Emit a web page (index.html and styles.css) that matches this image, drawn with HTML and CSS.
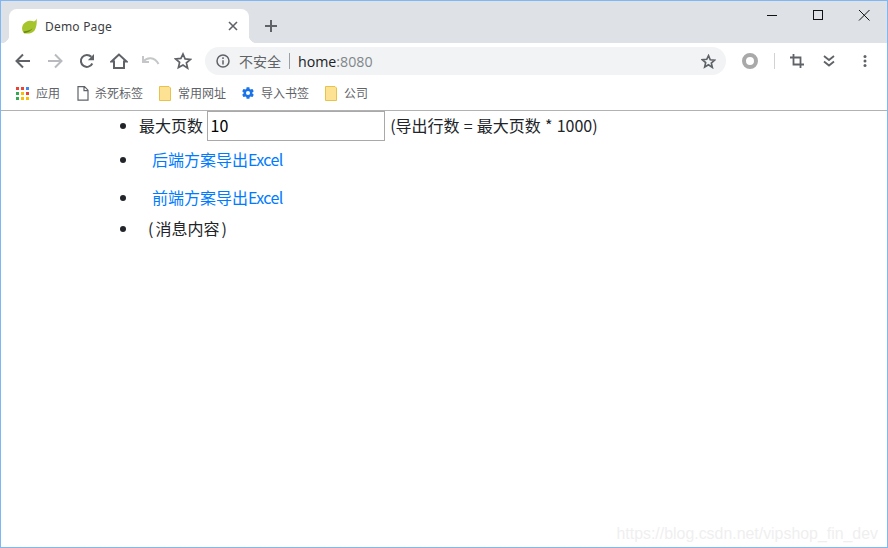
FILE: index.html
```html
<!DOCTYPE html>
<html lang="zh">
<head>
<meta charset="utf-8">
<title>Demo Page</title>
<link rel="stylesheet" href="styles.css">
</head>
<body>
<div class="window">
  <header class="titlebar">
    <div class="tab">
      <svg class="favicon" width="16" height="16" viewBox="0 0 16 16"><path d="M15.500 .5C15.300 2 14 3 13 3.500 9 1.500 3 3.500 1.500 8c-.8 2.500-.5 4.500.8 6.500l1 .8C6 15.800 11 15.800 13.600 12.500 15.500 9.500 16.200 4 15.500 .5Z" fill="#a6c52d"/><path d="M2.500 13.500C6 12.800 10 12.500 12 9.500 10.500 13 7 14.500 3.300 15.300Z" fill="#6c8a1b"/></svg>
      <span class="tab-title">Demo Page</span>
      <svg class="tab-close" width="10" height="10" viewBox="0 0 10 10"><path d="M1 1l8 8M9 1l-8 8" stroke="#5f6368" stroke-width="1.600" fill="none"/></svg>
    </div>
    <svg class="newtab" width="14" height="14" viewBox="0 0 14 14"><path d="M7 1v12M1 7h12" stroke="#5f6368" stroke-width="2" fill="none"/></svg>
    <div class="winctl">
      <svg width="46" height="11" viewBox="0 0 46 11"><path d="M18 5.500h10" stroke="#111" fill="none"/></svg>
      <svg width="46" height="11" viewBox="0 0 46 11"><rect x="18.500" y=".5" width="9" height="9" stroke="#111" fill="none"/></svg>
      <svg width="46" height="11" viewBox="0 0 46 11"><path d="M18 0l10.500 10.500M28.500 0L18 10.500" stroke="#111" fill="none"/></svg>
    </div>
  </header>

  <nav class="toolbar">
    <span class="tbtn"><svg width="16" height="16" viewBox="0 0 16 16"><path d="M15 8H2M8 1.500 1.500 8 8 14.500" stroke="#5f6368" stroke-width="2" fill="none"/></svg></span>
    <span class="tbtn"><svg width="16" height="16" viewBox="0 0 16 16"><path d="M1 8h13M8 1.500 14.500 8 8 14.500" stroke="#b8babd" stroke-width="2" fill="none"/></svg></span>
    <span class="tbtn"><svg width="16" height="16" viewBox="0 0 16 16"><path d="M13.300 10.500A6 6 0 1 1 12.300 3.800" stroke="#5f6368" stroke-width="2" fill="none"/><path d="M15 1v6.200H8.800Z" fill="#5f6368"/></svg></span>
    <span class="tbtn"><svg width="18" height="16" viewBox="0 0 18 16"><path d="M9 1.500 1.500 8.500H4v6.500h10V8.500h2.500Z" stroke="#5f6368" stroke-width="2" fill="none" stroke-linejoin="miter"/></svg></span>
    <span class="tbtn"><svg width="18" height="12" viewBox="0 0 18 12"><path d="M1 1v6h6M1.500 6.500C5 2 12.500 1.500 16.500 9" stroke="#c4c6c8" stroke-width="2" fill="none"/></svg></span>
    <span class="tbtn"><svg width="18" height="18" viewBox="0 0 18 18"><path d="M9 2l2.100 4.900 5.300.5-4 3.500 1.200 5.200L9 13l-4.600 2.600 1.200-5.200-4-3.500 5.300-.5Z" stroke="#5f6368" stroke-width="1.700" fill="none"/></svg></span>

    <div class="omnibox">
      <svg class="info" width="14" height="14" viewBox="0 0 14 14"><circle cx="7" cy="7" r="6" stroke="#5f6368" stroke-width="1.500" fill="none"/><path d="M7 6.200v4.300M7 3.300v1.600" stroke="#5f6368" stroke-width="1.500" fill="none"/></svg>
      <span class="insecure">不安全</span>
      <span class="omni-sep"></span>
      <span class="url">home<span class="url-port">:8080</span></span>
      <svg class="omni-star" width="15" height="15" viewBox="0 0 18 18"><path d="M9 2l2.100 4.900 5.300.5-4 3.500 1.200 5.200L9 13l-4.600 2.600 1.200-5.200-4-3.500 5.300-.5Z" stroke="#5f6368" stroke-width="2" fill="none"/></svg>
    </div>

    <div class="extensions">
      <svg class="ext-ring" width="16" height="16" viewBox="0 0 16 16"><circle cx="8" cy="8" r="6" stroke="#a9a9a9" stroke-width="4" fill="none"/></svg>
      <span class="ext-sep"></span>
      <svg class="ext-crop" width="14" height="14" viewBox="0 0 14 14"><path d="M3.500 0v10.500H14M0 3.500h10.500V14" stroke="#5f6368" stroke-width="1.800" fill="none"/></svg>
      <svg class="ext-chev" width="12" height="12" viewBox="0 0 12 12"><path d="M1 1l5 4 5-4M1 6.500l5 4 5-4" stroke="#5f6368" stroke-width="1.800" fill="none"/></svg>
      <svg class="ext-dots" width="4" height="12" viewBox="0 0 4 12"><circle cx="2" cy="1.500" r="1.500" fill="#5f6368"/><circle cx="2" cy="6" r="1.500" fill="#5f6368"/><circle cx="2" cy="10.500" r="1.500" fill="#5f6368"/></svg>
    </div>
  </nav>

  <div class="bookmarks">
    <span class="bm bm-apps">
      <svg width="13" height="13" viewBox="0 0 13 13">
        <rect x="0" y="0" width="3" height="3" fill="#ea4335"/><rect x="5" y="0" width="3" height="3" fill="#ea4335"/><rect x="10" y="0" width="3" height="3" fill="#4285f4"/>
        <rect x="0" y="5" width="3" height="3" fill="#34a853"/><rect x="5" y="5" width="3" height="3" fill="#fbbc05"/><rect x="10" y="5" width="3" height="3" fill="#ea4335"/>
        <rect x="0" y="10" width="3" height="3" fill="#34a853"/><rect x="5" y="10" width="3" height="3" fill="#fbbc05"/><rect x="10" y="10" width="3" height="3" fill="#fbbc05"/>
      </svg>应用</span>
    <span class="bm bm-doc">
      <svg width="12" height="15" viewBox="0 0 12 15"><path d="M1 .7h6.500L11 4.200v10H1ZM7 .7v4h4" stroke="#5f6368" stroke-width="1.200" fill="#fff"/></svg>杀死标签</span>
    <span class="bm bm-folder bm-tight">
      <svg width="12" height="15" viewBox="0 0 12 15"><path d="M.5.5h9.500l1.500 1.500v12.500H.5Z" fill="#fde293" stroke="#e9c349"/></svg>常用网址</span>
    <span class="bm bm-gear">
      <svg width="14" height="14" viewBox="0 0 24 24"><path fill="#1a73e8" d="M19.400 13c.04-.33.1-.66.1-1s-.06-.67-.1-1l2.100-1.650c.2-.15.25-.42.12-.64l-2-3.460c-.12-.22-.4-.3-.6-.22l-2.500 1c-.5-.4-1.100-.7-1.700-1L14.500 2.400C14.460 2.170 14.250 2 14 2h-4c-.25 0-.46.17-.5.420L9.100 5.050c-.6.250-1.200.6-1.700 1l-2.500-1c-.2-.08-.48 0-.6.220l-2 3.460c-.13.220-.07.490.12.640L4.500 11c-.04.330-.1.660-.1 1s.06.670.1 1l-2.100 1.650c-.2.150-.25.420-.12.640l2 3.460c.12.220.4.300.6.220l2.500-1c.5.400 1.100.7 1.700 1l.4 2.630c.04.230.25.400.5.400h4c.25 0 .46-.17.5-.42l.4-2.630c.6-.25 1.200-.6 1.700-1l2.500 1c.2.08.48 0 .6-.22l2-3.460c.13-.22.07-.49-.12-.64ZM12 15.500A3.500 3.500 0 1 1 12 8.500a3.500 3.500 0 0 1 0 7Z"/></svg>导入书签</span>
    <span class="bm bm-folder">
      <svg width="12" height="15" viewBox="0 0 12 15"><path d="M.5.5h9.500l1.500 1.500v12.500H.5Z" fill="#fde293" stroke="#e9c349"/></svg>公司</span>
  </div>

  <main class="page">
    <ul class="list">
      <li class="row">最大页数 <input class="pages" type="text" value="10"> <span class="note">(导出行数 = 最大页数 * 1000)</span></li>
      <li class="row"><a class="btn-link">后端方案导出<span class="latin">Excel</span></a></li>
      <li class="row"><a class="btn-link">前端方案导出<span class="latin">Excel</span></a></li>
      <li class="row row-message"><span class="message">(<span class="message-body">消息内容</span>)</span></li>
    </ul>
    <div class="watermark">https://blog.csdn.net/vipshop_fin_dev</div>
  </main>
</div>
</body>
</html>
```

FILE: styles.css
```css
* { box-sizing: border-box; }
html, body { margin: 0; height: 100%; overflow: hidden; background: #fff; }
body { font-family: "Noto Sans", "Noto Sans CJK SC", sans-serif; }

.window {
  width: 888px;
  height: 548px;
  border: 1px solid #7fb7f5;
  display: flex;
  flex-direction: column;
}

.titlebar {
  height: 42px;
  background: #dee1e6;
  padding: 8px 0 0 8px;
  display: flex;
  align-items: flex-start;
  flex: none;
}
.tab {
  position: relative;
  width: 240px;
  height: 34px;
  background: #fff;
  border-radius: 8px 8px 0 0;
  display: flex;
  align-items: center;
  padding: 0 11px 0 12px;
}
.tab::before, .tab::after {
  content: "";
  position: absolute;
  bottom: 0;
  width: 8px;
  height: 8px;
}
.tab::before { left: -8px; background: radial-gradient(circle at 0 0, transparent 8px, #fff 8.500px); }
.tab::after { right: -8px; background: radial-gradient(circle at 100% 0, transparent 8px, #fff 8.500px); }
.favicon { flex: none; }
.tab-title { margin-left: 8px; font-size: 12px; letter-spacing: .2px; color: #3c4043; flex: 1; }
.tab-close { flex: none; }
.newtab { margin: 10px 0 0 15px; flex: none; }
.winctl { margin-left: auto; display: flex; padding: 1px 0 0 0; }
.winctl svg { display: block; }

.toolbar {
  height: 37px;
  background: #fff;
  display: flex;
  align-items: center;
  padding: 0 0 1px 6px;
  flex: none;
}
.tbtn {
  width: 32px;
  height: 28px;
  display: flex;
  align-items: center;
  justify-content: center;
  flex: none;
}
.omnibox {
  width: 521px;
  height: 28px;
  margin-left: 6px;
  border-radius: 14px;
  background: #f1f3f4;
  display: flex;
  align-items: center;
  padding: 0 10px 0 11px;
  flex: none;
}
.insecure { margin-left: 9px; font-size: 14px; color: #5f6368; }
.omni-sep { width: 1px; height: 16px; background: #9aa0a6; margin: 0 8px; }
.url { font-size: 14.200px; color: #202124; font-family: "Open Sans", sans-serif; }
.url-port { color: #80868b; }
.omni-star { margin-left: auto; }
.extensions { display: flex; align-items: center; flex: none; }
.ext-ring { margin-left: 16px; }
.ext-sep { width: 1px; height: 16px; background: #d0d2d5; margin-left: 16px; }
.ext-crop { margin-left: 15px; }
.ext-chev { margin-left: 19px; }
.ext-dots { margin-left: 28px; }

.bookmarks {
  height: 30px;
  background: #fff;
  display: flex;
  align-items: center;
  padding: 0 0 4px 15px;
  flex: none;
}
.bm { display: flex; align-items: center; font-size: 12px; color: #5f6368; margin-right: 16px; }
.bm-apps { margin-right: 17px; }
.bm-tight { margin-right: 15px; }
.bm-apps svg { margin-right: 7px; }
.bm-doc svg { margin-right: 6px; }
.bm-folder svg { margin-right: 7px; }
.bm-gear svg { margin-right: 6px; }

.page {
  position: relative;
  flex: 1;
  border-top: 1px solid #b2b2b2;
  color: #212529;
  font-size: 16px;
  line-height: 24px;
  font-family: "Noto Sans CJK SC", sans-serif;
}
.list { margin: 0; padding: 0 0 0 138px; }
.row-message { line-height: 22px; padding-bottom: 2px; }
.pages {
  width: 178px;
  height: 30px;
  padding: 0 3px 2px;
  border: 1px solid #a9a9a9;
  font: 16px "Noto Sans CJK SC", sans-serif;
  color: #000;
  vertical-align: baseline;
  margin: 0;
}
.note { margin-left: 2px; word-spacing: .6px; }
.btn-link {
  display: inline-block;
  padding: 5px 13px 7px;
  color: #007bff;
  line-height: 26px;
}
.latin { letter-spacing: -.6px; }
.message { padding-left: 9px; }
.message-body { margin: 0 2px; }
.watermark {
  position: absolute;
  right: 9px;
  bottom: 4px;
  font: 15.900px "Liberation Sans", sans-serif;
  color: #efefef;
}
```
